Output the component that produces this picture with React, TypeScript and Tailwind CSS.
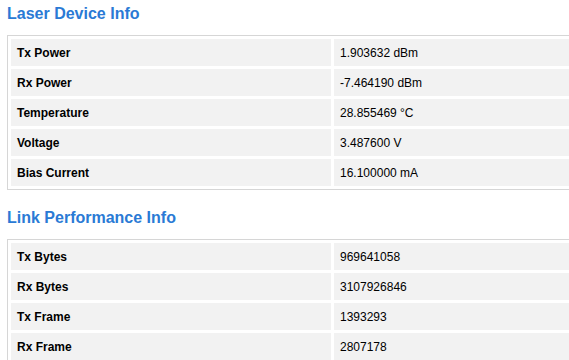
import React from "react";

const laser: [string, string][] = [
  ["Tx Power", "1.903632 dBm"],
  ["Rx Power", "-7.464190 dBm"],
  ["Temperature", "28.855469 \u00B0C"],
  ["Voltage", "3.487600 V"],
  ["Bias Current", "16.100000 mA"],
];

const link: [string, string][] = [
  ["Tx Bytes", "969641058"],
  ["Rx Bytes", "3107926846"],
  ["Tx Frame", "1393293"],
  ["Rx Frame", "2807178"],
];

function InfoTable({ rows }: { rows: [string, string][] }) {
  return (
    <table className="ml-[7px] w-[651px] border border-[#d6d6d6] border-separate border-spacing-[3px] text-[12px] text-black">
      <tbody>
        {rows.map(([k, v]) => (
          <tr key={k}>
            <td className="w-[320px] h-[27px] p-0 pl-[6px] bg-[#f2f2f2] font-bold align-middle">{k}</td>
            <td className="w-[320px] h-[27px] p-0 pl-[6px] bg-[#f2f2f2] align-middle">{v}</td>
          </tr>
        ))}
      </tbody>
    </table>
  );
}

export default function App() {
  return (
    <div className="w-[569px] h-[360px] overflow-hidden bg-white font-['Liberation_Sans',Arial,sans-serif]">
      <h2 className="mt-[4px] ml-[7px] mb-[11px] text-[16px] leading-[20px] font-bold text-[#2a7ad5]">Laser Device Info</h2>
      <InfoTable rows={laser} />
      <h2 className="mt-[18px] ml-[7px] mb-[11px] text-[16px] leading-[20px] font-bold text-[#2a7ad5]">Link Performance Info</h2>
      <InfoTable rows={link} />
    </div>
  );
}
